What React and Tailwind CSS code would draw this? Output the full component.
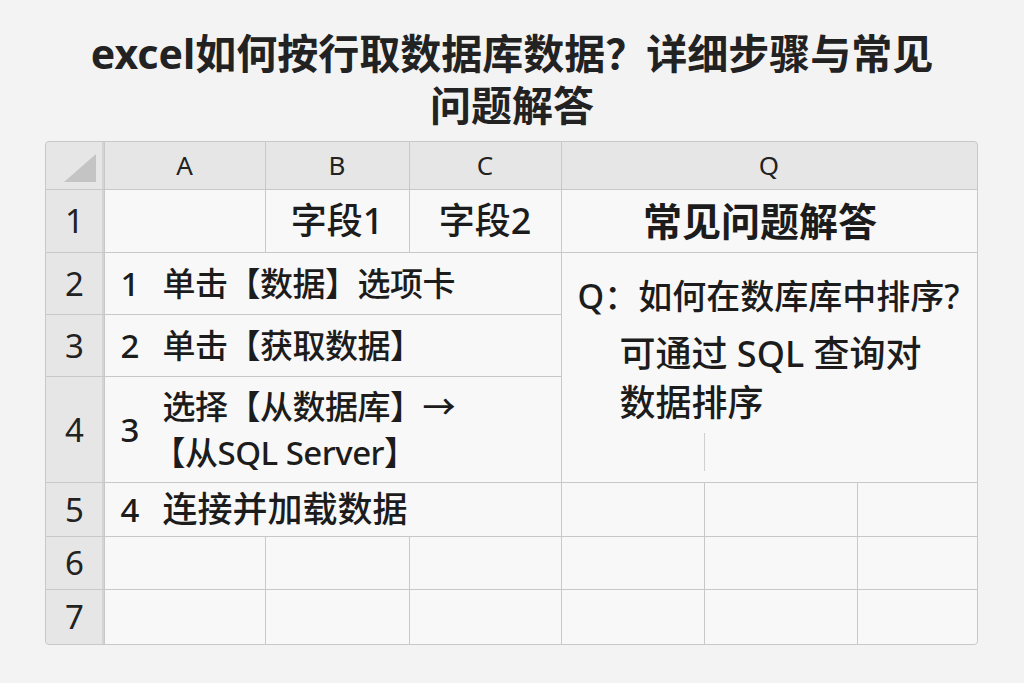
// Spreadsheet-style FAQ illustration
export default function App() {
  const font = { fontFamily: '"Noto Sans", "Noto Sans CJK SC", sans-serif' }
  const cell = 'bg-[#f8f8f8] flex items-center'
  const head = 'bg-[#e6e6e6] flex items-center justify-center text-[26px] text-[#222]'
  const rowHead = 'bg-[#e6e6e6] flex items-center justify-center text-[33px] text-[#222] shadow-[inset_-2px_0_0_#d4d4d4]'

  const steps = [
    { row: 3, n: '1', text: '单击【数据】选项卡' },
    { row: 4, n: '2', text: '单击【获取数据】' },
  ]

  return (
    <div style={font} className="w-[1024px] h-[683px] bg-[#f3f3f3] text-[#1c1c1c] flex flex-col items-center">
      <h1 className="mt-[27px] text-center text-[41px] leading-[52px] font-bold text-[#222] whitespace-nowrap">
        excel如何按行取数据库数据？详细步骤与常见
        <br />
        问题解答
      </h1>

      <div
        className="mt-[10px] ml-[-2px] grid gap-px bg-[#c8c8c8] border border-[#c8c8c8] rounded-[4px] overflow-hidden"
        style={{
          gridTemplateColumns: '58px 160px 143px 151px 142px 152px 119px',
          gridTemplateRows: '47px 62px 61px 61px 105px 53px 52px 54px',
        }}
      >
        {/* column headers */}
        <div className="bg-[#e6e6e6] flex items-end justify-end pr-[8px] pb-[7px] shadow-[inset_-2px_0_0_#d4d4d4]">
          <svg width="32" height="28" viewBox="0 0 32 28">
            <polygon points="32,0 32,28 0,28" fill="#c4c4c4" />
          </svg>
        </div>
        <div className={head}>A</div>
        <div className={head}>B</div>
        <div className={head}>C</div>
        <div className={head} style={{ gridColumn: '5 / 8' }}>Q</div>

        {/* row 1 */}
        <div className={rowHead}>1</div>
        <div className={cell}></div>
        <div className={`${cell} justify-center text-[36px] font-medium`}>字段1</div>
        <div className={`${cell} justify-center text-[36px] font-medium`}>字段2</div>
        <div className={`${cell} justify-center text-[39px] font-bold pr-[18px]`} style={{ gridColumn: '5 / 8' }}>
          常见问题解答
        </div>

        {/* rows 2-4 */}
        <div className={rowHead} style={{ gridRow: 3 }}>2</div>
        <div className={rowHead} style={{ gridRow: 4 }}>3</div>
        <div className={rowHead} style={{ gridRow: 5 }}>4</div>
        {steps.map((s) => (
          <div key={s.n} className={`${cell} pl-[16px] text-[33px] font-medium`} style={{ gridColumn: '2 / 5', gridRow: s.row }}>
            <span className="w-[42px]">{s.n}</span>
            <span className="tracking-[-0.5px]">{s.text}</span>
          </div>
        ))}
        <div className={`${cell} pl-[16px] text-[33px] font-medium`} style={{ gridColumn: '2 / 5', gridRow: 5 }}>
          <span className="w-[42px]">3</span>
          <span className="leading-[46px] tracking-[-0.5px]">
            选择【从数据库】→
            <br />
            <span className="ml-[-10px]">【从SQL Server】</span>
          </span>
        </div>

        <div
          className="bg-[#f8f8f8] relative flex flex-col pl-[16px] pt-[20px] font-medium"
          style={{ gridColumn: '5 / 8', gridRow: '3 / 6' }}
        >
          <div className="text-[34px] leading-[46px] whitespace-nowrap">Q：如何在数库库中排序?</div>
          <div className="pl-[42px] mt-[10px] text-[36px] leading-[49px]">
            可通过 SQL 查询对
            <br />
            数据排序
          </div>
          <div className="absolute left-[142px] top-[180px] h-[38px] w-px bg-[#cfcfcf]"></div>
        </div>

        {/* row 5 */}
        <div className={rowHead}>5</div>
        <div className={`${cell} pl-[16px] text-[35px] font-medium`} style={{ gridColumn: '2 / 5' }}>
          <span className="w-[42px] text-[33px]">4</span>
          <span>连接并加载数据</span>
        </div>
        <div className={cell}></div>
        <div className={cell}></div>
        <div className={cell}></div>

        {/* rows 6-7 */}
        {['6', '7'].map((r) => (
          <>
            <div key={`h${r}`} className={rowHead}>{r}</div>
            {[0, 1, 2, 3, 4, 5].map((c) => (
              <div key={`${r}-${c}`} className={cell}></div>
            ))}
          </>
        ))}
      </div>
    </div>
  )
}
